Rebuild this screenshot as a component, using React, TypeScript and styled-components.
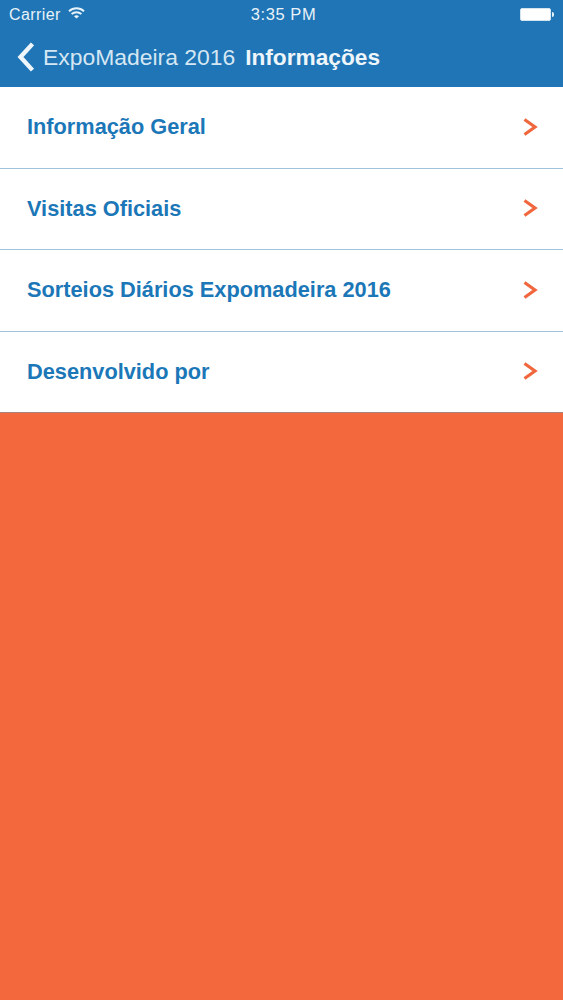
import { createGlobalStyle, styled } from 'styled-components';

const GlobalStyle = createGlobalStyle`
  html, body {
    margin: 0;
    padding: 0;
    height: 100%;
    background: #f4683e;
  }
  #root {
    height: 100%;
  }
`;

const Page = styled.div`
  width: 563px;
  height: 1000px;
  overflow: hidden;
  display: flex;
  flex-direction: column;
  font-family: 'Liberation Sans', Arial, sans-serif;
  background: #f4683e;
`;

const Header = styled.header`
  height: 87px;
  background: #1f75b5;
  color: #fff;
  display: flex;
  flex-direction: column;
`;

const StatusBar = styled.div`
  height: 29px;
  display: grid;
  grid-template-columns: 1fr auto 1fr;
  align-items: center;
  padding: 0 9px 0 9px;
  font-size: 16px;
  letter-spacing: 0.4px;
  color: #e8f2f9;
`;

const Carrier = styled.div`
  display: flex;
  align-items: center;
  gap: 7px;
`;

const WifiBox = styled.span`
  display: flex;
  margin-bottom: 3px;
`;

const Clock = styled.div`
  margin-left: 4px;
  font-size: 16.5px;
  letter-spacing: 0.6px;
`;

const Battery = styled.div`
  justify-self: end;
  display: flex;
  align-items: center;
  gap: 1px;
`;

const BatteryBody = styled.div`
  width: 29px;
  height: 11px;
  background: #fff;
  border: 1px solid #d3e4f1;
  border-radius: 2px;
`;

const BatteryCap = styled.div`
  width: 2px;
  height: 5px;
  background: #e8f2f9;
  border-radius: 0 2px 2px 0;
`;

const NavBar = styled.nav`
  flex: 1;
  display: flex;
  align-items: center;
  padding: 0 0 2px 16px;
`;

const BackLabel = styled.span`
  margin-left: 8px;
  font-size: 22.9px;
  color: #d6e7f4;
`;

const Title = styled.h1`
  margin: 0 0 0 10px;
  font-size: 22.7px;
  font-weight: 700;
  color: #eef6fb;
`;

const List = styled.ul`
  margin: 0;
  padding: 0;
  list-style: none;
  background: #fff;
`;

const Row = styled.li`
  height: 80.5px;
  box-sizing: content-box;
  display: flex;
  align-items: center;
  justify-content: space-between;
  padding: 0 25px 0 27px;
  border-bottom: 1px solid #9fc3da;

  &:last-child {
    border-bottom-color: #a8857c;
  }
`;

const RowLabel = styled.span`
  font-size: 21.75px;
  font-weight: 700;
  color: #1b77b7;
`;

const ChevronBox = styled.span`
  display: flex;
  margin-bottom: 1px;
`;

const WifiIcon = () => (
  <svg width="17" height="12" viewBox="0 0 17 12" fill="none" stroke="#e8f2f9" strokeWidth="2">
    <path d="M1 4.2C5.2 .4 11.8 .4 16 4.2" />
    <path d="M3.6 7C6.4 4.6 10.6 4.6 13.4 7" />
    <path d="M8.5 11.6 6 9.2C7.4 8 9.6 8 11 9.2Z" fill="#e8f2f9" stroke="none" />
  </svg>
);

const BackIcon = () => (
  <svg width="19" height="30" viewBox="0 0 19 30" fill="none" stroke="#eef6fb" strokeWidth="4.4" strokeLinecap="square">
    <path d="M15 3.5 4.5 15 15 26.5" />
  </svg>
);

const Chevron = () => (
  <svg width="15" height="18" viewBox="0 0 15 18" fill="none" stroke="#f0673d" strokeWidth="3.2">
    <path d="M1.5 1.5 12 9 1.5 16.5" />
  </svg>
);

const items = [
  'Informação Geral',
  'Visitas Oficiais',
  'Sorteios Diários Expomadeira 2016',
  'Desenvolvido por',
];

const App = () => (
  <Page>
    <GlobalStyle />
    <Header>
      <StatusBar>
        <Carrier>
          Carrier
          <WifiBox>
            <WifiIcon />
          </WifiBox>
        </Carrier>
        <Clock>3:35 PM</Clock>
        <Battery>
          <BatteryBody />
          <BatteryCap />
        </Battery>
      </StatusBar>
      <NavBar>
        <BackIcon />
        <BackLabel>ExpoMadeira 2016</BackLabel>
        <Title>Informações</Title>
      </NavBar>
    </Header>
    <List>
      {items.map((item) => (
        <Row key={item}>
          <RowLabel>{item}</RowLabel>
          <ChevronBox>
            <Chevron />
          </ChevronBox>
        </Row>
      ))}
    </List>
  </Page>
);

export default App;
